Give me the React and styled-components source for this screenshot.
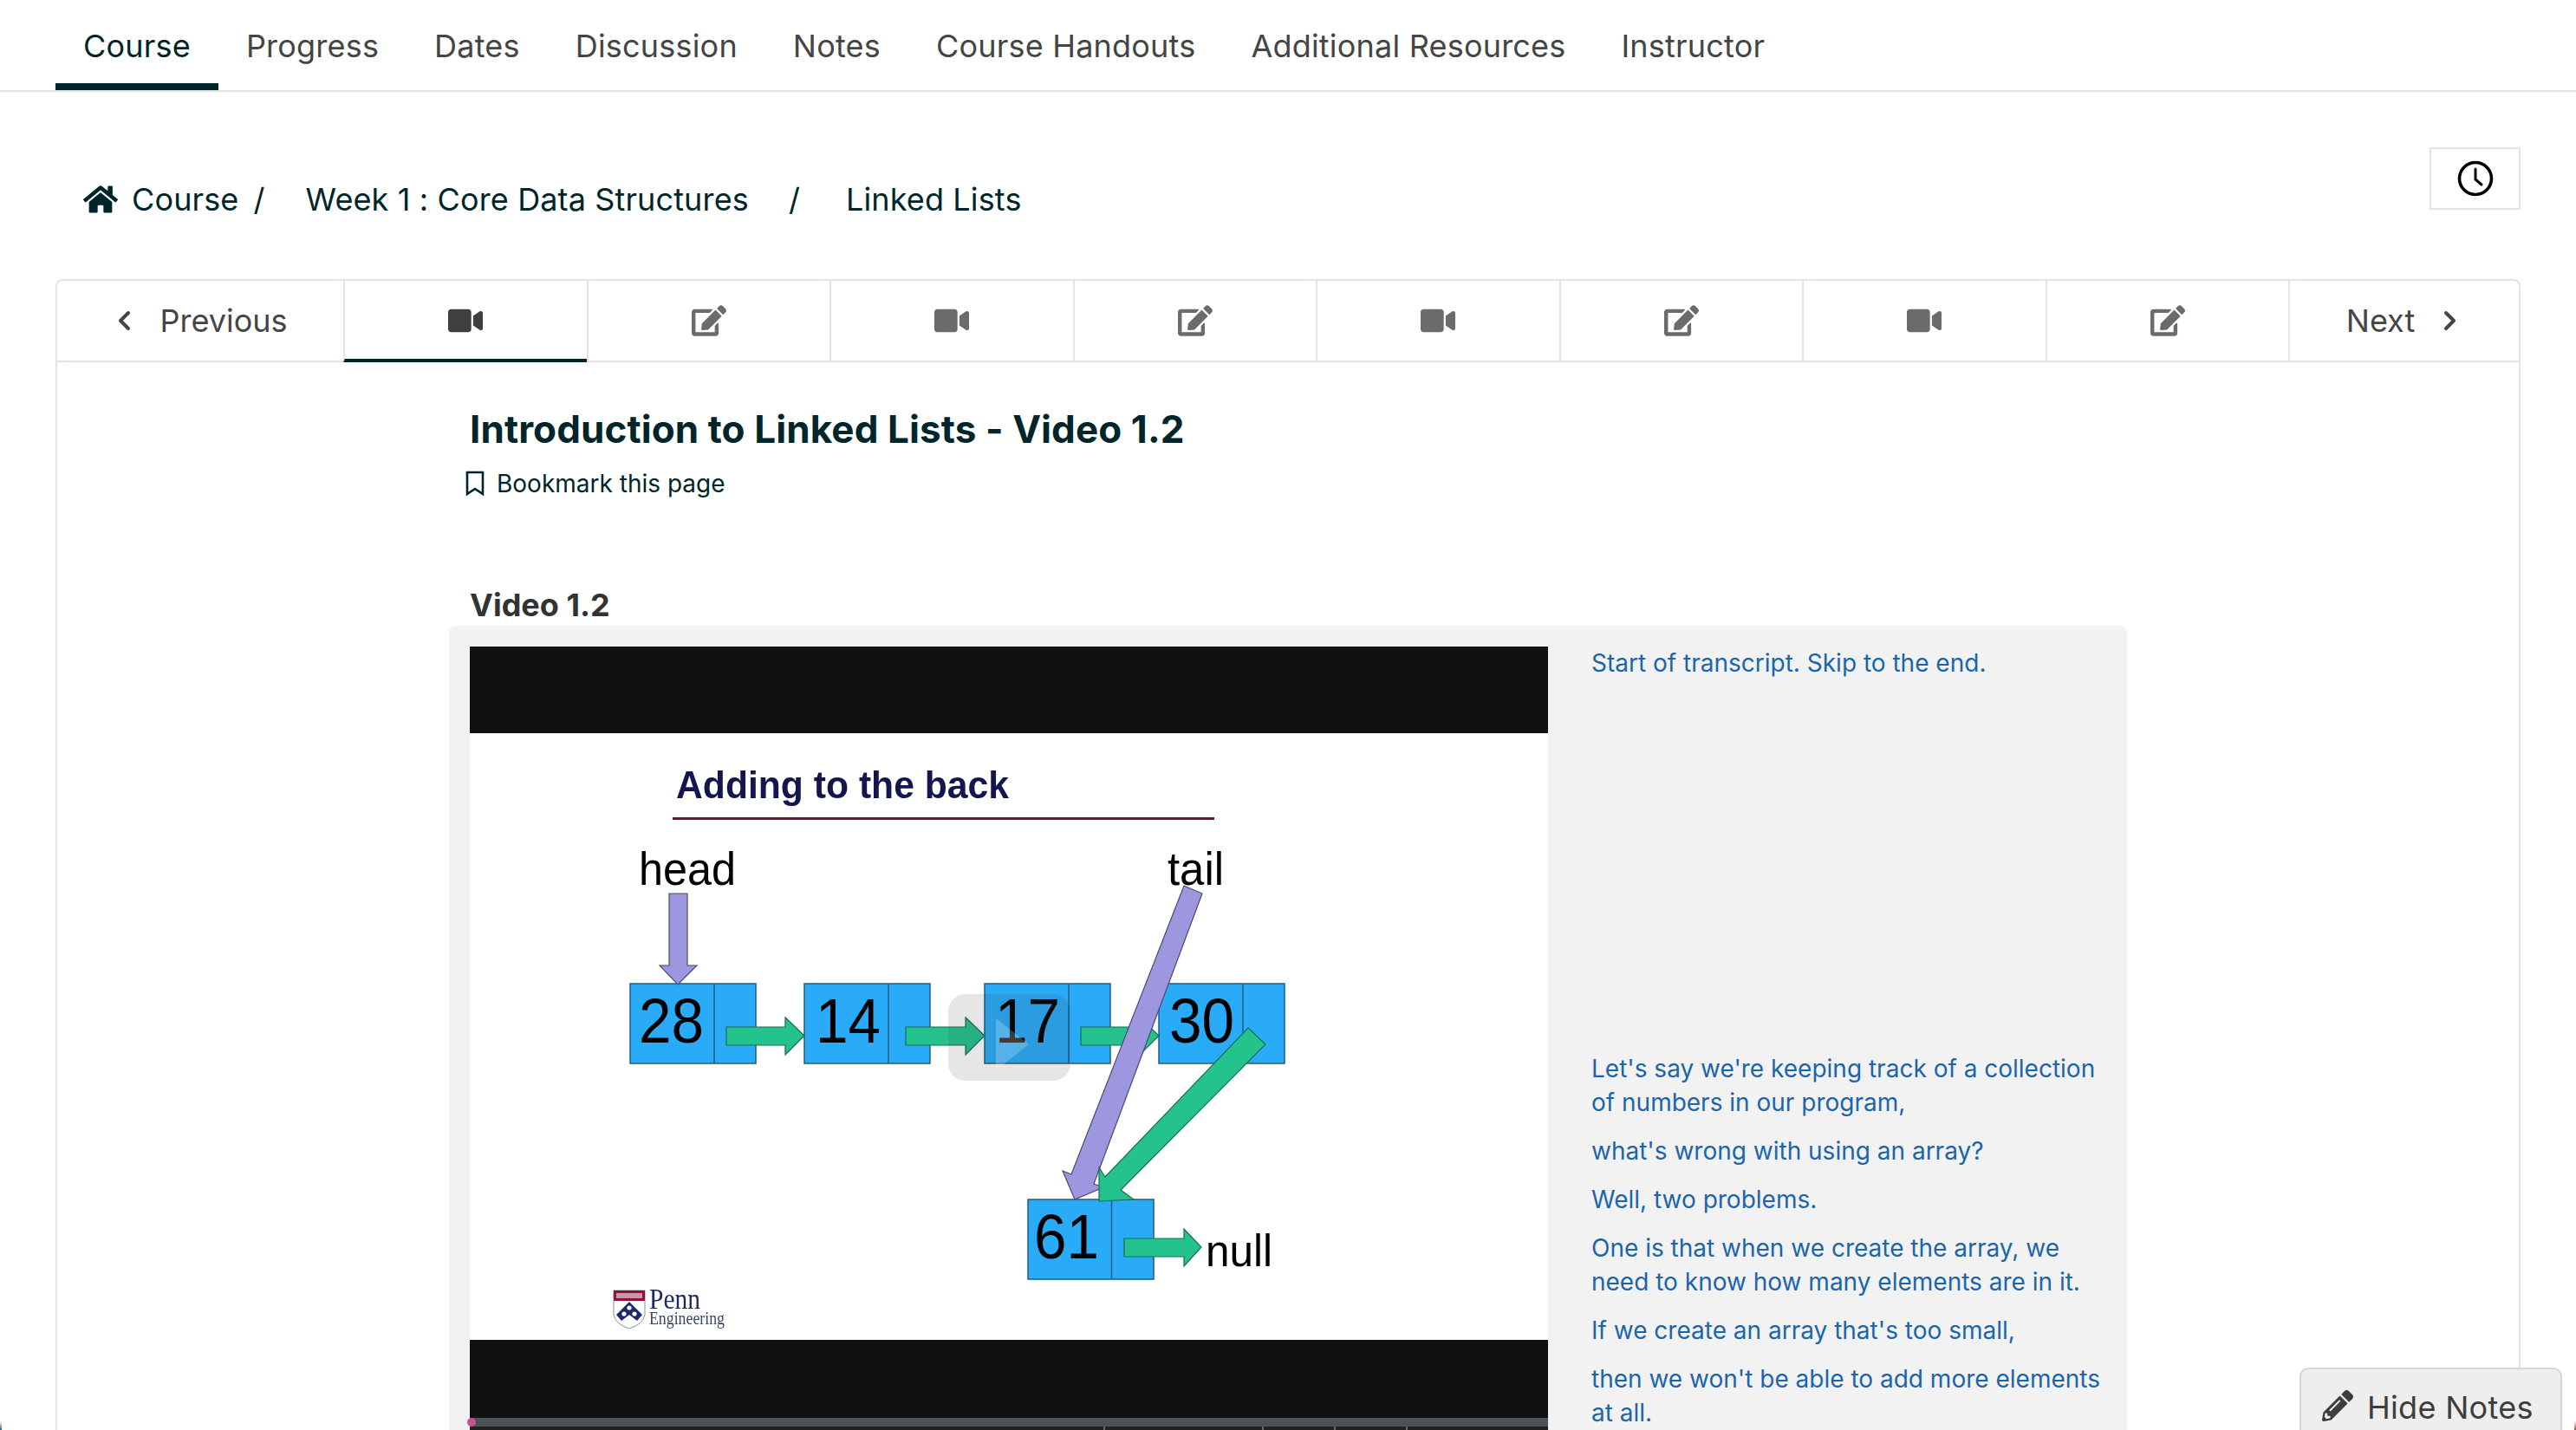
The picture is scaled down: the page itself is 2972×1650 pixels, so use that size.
import React from "react";
import styled, { createGlobalStyle } from "styled-components";
import { FaHome, FaVideo, FaEdit, FaPencilAlt } from "react-icons/fa";

const Global = createGlobalStyle`
  html, body { margin: 0; padding: 0; background: #fff; }
  #root { height: 1650px; overflow: hidden; }
  * { box-sizing: border-box; }
  body { font-family: Inter, "Noto Sans", sans-serif; color: #00262b; }
`;

const Page = styled.div`
  position: relative;
  width: 2972px;
  height: 1650px;
  overflow: hidden;
`;

const TabBar = styled.nav`
  display: flex;
  height: 106px;
  padding-left: 64px;
  border-bottom: 2px solid #e7e3e3;
`;
const Tab = styled.a`
  display: flex;
  align-items: center;
  height: 104px;
  padding: 10px 32px 0;
  font-size: 36px;
  letter-spacing: 0.2px;
  color: ${p => (p.$active ? "#00262b" : "#454545")};
  border-bottom: 8px solid ${p => (p.$active ? "#00262b" : "transparent")};
`;

const CrumbRow = styled.div`
  display: flex;
  justify-content: space-between;
  align-items: flex-start;
  height: 216px;
  padding: 64px 64px 0 96px;
`;
const Crumbs = styled.div`
  display: flex;
  align-items: center;
  height: 44px;
  margin-top: 38px;
  font-size: 36px;
  letter-spacing: 0.13px;
  color: #00262b;
`;
const HomeIcon = styled(FaHome)`
  width: 40px;
  height: 40px;
  margin-right: 16px;
`;
const Sep = styled.span`
  margin-left: ${p => p.$before}px;
  margin-right: ${p => p.$after}px;
`;
const ClockBox = styled.button`
  display: flex;
  align-items: center;
  justify-content: center;
  width: 105px;
  height: 72px;
  padding: 0;
  background: #fff;
  border: 2px solid #e7e3e3;
`;

const Sequence = styled.section`
  margin: 0 64px;
  height: 1400px;
  border: 2px solid #e7e3e3;
  border-bottom: 0;
  border-radius: 8px 8px 0 0;
`;
const SeqBar = styled.div`
  display: grid;
  grid-template-columns: 330px repeat(8, 280.5px) 266px;
  height: 94px;
  border-bottom: 2px solid #e7e3e3;
`;
const SeqButton = styled.button`
  display: flex;
  align-items: center;
  justify-content: center;
  gap: 33px;
  height: 94px;
  padding: 0 ${p => (p.$first ? 0 : 6)}px 2px ${p => (p.$first ? 5 : 0)}px;
  background: transparent;
  border: 0;
  border-left: ${p => (p.$first ? "none" : "2px solid #e7e3e3")};
  font: 400 36px Inter, sans-serif;
  color: #454545;
`;
const SeqTab = styled.button`
  display: flex;
  align-items: center;
  justify-content: center;
  height: 94px;
  padding: 2px 0 ${p => (p.$active ? 0 : 4)}px;
  background: transparent;
  border: 0;
  border-left: 2px solid #e7e3e3;
  border-bottom: ${p => (p.$active ? "4px solid #00262b" : "0")};
  color: ${p => (p.$active ? "#3f3f3f" : "#6b6b6b")};
  svg { width: 40px; height: 40px; display: block; }
`;

const Column = styled.div`
  width: 1936px;
  margin-left: 452px;
`;
const Header = styled.header`
  padding: 49px 0 0 24px;
`;
const Title = styled.h1`
  margin: 0;
  font-size: 44px;
  line-height: 56px;
  font-weight: 700;
  letter-spacing: 0.1px;
  color: #00262b;
`;
const Bookmark = styled.div`
  display: flex;
  align-items: center;
  gap: 14px;
  height: 40px;
  margin: 15px 0 98px -5px;
  font-size: 28px;
  color: #00262b;
`;
const VideoLabel = styled.h2`
  margin: 0 0 2px;
  font-size: 36px;
  line-height: 44px;
  font-weight: 700;
  color: #333;
`;
const Panel = styled.div`
  display: flex;
  gap: 50px;
  padding: 24px;
  background: #f2f2f2;
  border-radius: 8px;
  height: 1000px;
`;
const Player = styled.div`
  position: relative;
  flex: 0 0 1244px;
  background: #111;
  height: 960px;
`;
const Letterbox = styled.div`
  height: ${p => p.$h}px;
  background: #111;
`;
const SlideSvg = styled.svg`
  display: block;
  width: 1244px;
  height: 700px;
  background: #fff;
  filter: blur(0.45px);
`;
const Progress = styled.div`
  height: 10px;
  background: #4a5355;
`;
const Controls = styled.div`
  height: 60px;
  background: #222;
`;
const Handle = styled.span`
  position: absolute;
  left: -3px;
  top: 890px;
  width: 10px;
  height: 10px;
  border-radius: 50%;
  background: #c9508f;
`;
const Tick = styled.span`
  position: absolute;
  left: ${p => p.$x}px;
  top: 900px;
  width: 2px;
  height: 4px;
  background: #666;
`;

const Transcript = styled.div`
  width: 596px;
`;
const Cue = styled.p`
  margin: 0 0 ${p => (p.$gap ? p.$gap : 17)}px;
  font-size: 28px;
  line-height: 39px;
  color: #1a65ab;
`;

const HideNotes = styled.button`
  position: absolute;
  left: 2653px;
  top: 1578px;
  width: 303px;
  height: 100px;
  display: flex;
  align-items: flex-start;
  gap: 16px;
  padding: 24px 0 0 24px;
  background: #eee;
  border: 2px solid #d6d6d6;
  border-radius: 10px;
  font: 400 36px/40px Inter, sans-serif;
  letter-spacing: 0.3px;
  color: #3d3d3d;
`;
const Edge = styled.span`
  position: absolute;
  bottom: 0;
  ${p => (p.$right ? "right: 0;" : "left: 0;")}
  width: 2px;
  height: 10px;
  background: ${p => (p.$right ? "linear-gradient(#fff, #8a5a3a)" : "linear-gradient(#fff, #2a5f8a)")};
`;

const Chevron = ({ left }) => (
  <svg width="16" height="24" viewBox="0 0 16 24" fill="none" stroke="#454545" strokeWidth="4" strokeLinecap="round" strokeLinejoin="round">
    <polyline points={left ? "13,3 4,12 13,21" : "3,3 12,12 3,21"} />
  </svg>
);

const Box = ({ x, y = 1135, div, label, tx }) => (
  <g>
    <rect x={x} y={y} width="145" height="92" fill="#29abf8" stroke="#1d5f86" strokeWidth="1.5" />
    <line x1={div} x2={div} y1={y} y2={y + 92} stroke="#1d5f86" strokeWidth="1.5" />
    <text x={tx} y={y + 68} fontFamily='"Liberation Sans", sans-serif' fontSize="72" textLength="75" lengthAdjust="spacingAndGlyphs" fill="#000">{label}</text>
  </g>
);
const Arrow = ({ x, base, tip, y = 1195 }) => (
  <polygon
    points={`${x},${y - 10} ${base},${y - 10} ${base},${y - 21} ${tip},${y} ${base},${y + 22} ${base},${y + 11} ${x},${y + 11}`}
    fill="#24c38e"
    stroke="#1c6a55"
    strokeWidth="1.2"
  />
);

const Slide = () => (
  <SlideSvg viewBox="542 846 1244 700">
    <g fontFamily='"Liberation Sans", sans-serif'>
      <text x="780" y="921" fontSize="45" fontWeight="700" textLength="384" lengthAdjust="spacingAndGlyphs" fill="#14174d">Adding to the back</text>
      <rect x="776" y="943" width="625" height="3" fill="#7a1030" />
      <text x="737" y="1021" fontSize="53" textLength="112" lengthAdjust="spacingAndGlyphs" fill="#000">head</text>
      <text x="1347" y="1021" fontSize="53" textLength="65" lengthAdjust="spacingAndGlyphs" fill="#000">tail</text>
      <text x="1391" y="1461" fontSize="52" textLength="77" lengthAdjust="spacingAndGlyphs" fill="#000">null</text>
    </g>
    <Box x={727} div={824} label="28" tx={737} />
    <Box x={928} div={1025} label="14" tx={941} />
    <Box x={1136} div={1233} label="17" tx={1148} />
    <Box x={1337} div={1434} label="30" tx={1349} />
    <Box x={1186} y={1384} div={1282.5} label="61" tx={1193} />
    <polygon points="772,1031 793,1031 793,1114 804,1114 782,1136 761,1114 772,1114" fill="#9d97e0" stroke="#4a4870" strokeWidth="1.2" />
    <Arrow x={838} base={906} tip={928} />
    <Arrow x={1045} base={1114} tip={1136} />
    <Arrow x={1247} base={1315} tip={1337} />
    <Arrow x={1297} base={1366} tip={1386} y={1439} />
    <polygon points="1366,1022 1387,1031 1262,1366 1273,1370 1240,1384 1226,1351 1236,1355" fill="#9d97e0" stroke="#4a4870" strokeWidth="1.2" />
    <polygon points="1440,1186 1460,1205 1293,1373 1308,1384 1268,1386 1268,1347 1275,1358" fill="#24c38e" stroke="#1c6a55" strokeWidth="1.2" />
    <rect x="1094" y="1147" width="141" height="100" rx="20" fill="#333" fillOpacity="0.12" />
    <polygon points="1149,1175 1187,1205 1149,1235" fill="#fff" fillOpacity="0.22" />
    <g>
      <path d="M708 1489h36v28q-2 11-18 16q-16-5-18-16z" fill="#fff" stroke="#8b8f9c" strokeWidth="1" />
      <rect x="708" y="1489" width="36" height="12" fill="#8a1538" />
      <path d="M711 1492h30v6h-30z" fill="#fff" fillOpacity="0.55" />
      <path d="M726 1502l15 15-6 7-9-7-9 7-6-7z" fill="#1a2a6c" />
      <circle cx="726" cy="1509" r="2.6" fill="#fff" />
      <circle cx="720" cy="1516" r="2.6" fill="#fff" />
      <circle cx="732" cy="1516" r="2.6" fill="#fff" />
      <text x="749" y="1510" fontFamily='"Liberation Serif", serif' fontSize="34" textLength="59" lengthAdjust="spacingAndGlyphs" fill="#1f2a5c">Penn</text>
      <text x="749" y="1528" fontFamily='"Liberation Serif", serif' fontSize="20" textLength="87" lengthAdjust="spacingAndGlyphs" fill="#3a4560">Engineering</text>
    </g>
  </SlideSvg>
);

const tabs = ["Course", "Progress", "Dates", "Discussion", "Notes", "Course Handouts", "Additional Resources", "Instructor"];
const units = [0, 1, 0, 1, 0, 1, 0, 1];
const ticks = [731, 914, 997, 1080];

export default function App() {
  return (
    <Page>
      <Global />
      <TabBar>
        {tabs.map((t, i) => (
          <Tab key={t} $active={i === 0}>{t}</Tab>
        ))}
      </TabBar>
      <CrumbRow>
        <Crumbs>
          <HomeIcon />
          <span>Course</span>
          <Sep $before={17} $after={47}>/</Sep>
          <span>Week 1 : Core Data Structures</span>
          <Sep $before={46} $after={53}>/</Sep>
          <span>Linked Lists</span>
        </Crumbs>
        <ClockBox aria-label="Clock">
          <svg width="44" height="44" viewBox="0 0 44 44" fill="none" stroke="#000" strokeWidth="3.6" strokeLinecap="round" strokeLinejoin="round">
            <circle cx="22" cy="22" r="18.5" />
            <polyline points="22,11 22,23 29,29" strokeWidth="3" />
          </svg>
        </ClockBox>
      </CrumbRow>
      <Sequence>
        <SeqBar>
          <SeqButton $first>
            <Chevron left />
            Previous
          </SeqButton>
          {units.map((u, i) => (
            <SeqTab key={i} $active={i === 0}>
              {u ? <FaEdit /> : <FaVideo />}
            </SeqTab>
          ))}
          <SeqButton>
            Next
            <Chevron />
          </SeqButton>
        </SeqBar>
        <Column>
          <Header>
            <Title>Introduction to Linked Lists - Video 1.2</Title>
            <Bookmark>
              <svg width="22" height="30" viewBox="0 0 22 30" fill="none" stroke="#00262b" strokeWidth="2.6" strokeLinejoin="miter">
                <path d="M2 2h18v25l-9-6-9 6z" />
              </svg>
              Bookmark this page
            </Bookmark>
            <VideoLabel>Video 1.2</VideoLabel>
          </Header>
          <Panel>
            <Player>
              <Letterbox $h={100} />
              <Slide />
              <Letterbox $h={90} />
              <Progress />
              <Controls />
              <Handle />
              {ticks.map(x => (
                <Tick key={x} $x={x} />
              ))}
            </Player>
            <Transcript>
              <Cue $gap={429}>Start of transcript. Skip to the end.</Cue>
              <Cue>Let's say we're keeping track of a collection of numbers in our program,</Cue>
              <Cue>what's wrong with using an array?</Cue>
              <Cue>Well, two problems.</Cue>
              <Cue>One is that when we create the array, we need to know how many elements are in it.</Cue>
              <Cue>If we create an array that's too small,</Cue>
              <Cue>then we won't be able to add more elements at all.</Cue>
            </Transcript>
          </Panel>
        </Column>
      </Sequence>
      <HideNotes>
        <FaPencilAlt size={36} />
        Hide Notes
      </HideNotes>
      <Edge />
      <Edge $right />
    </Page>
  );
}
